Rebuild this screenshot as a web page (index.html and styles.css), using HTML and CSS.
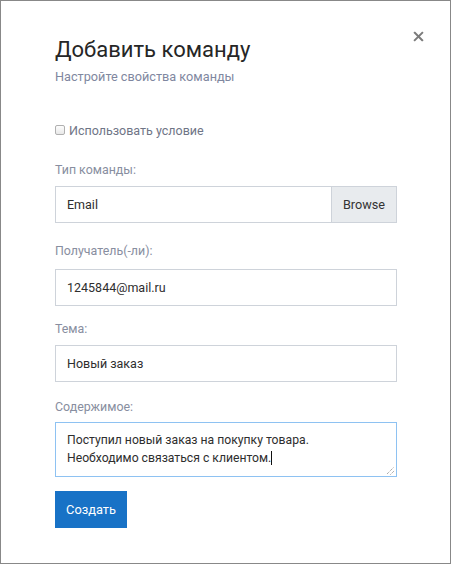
FILE: index.html
```html
<!DOCTYPE html>
<html lang="ru">
<head>
<meta charset="utf-8">
<link rel="stylesheet" href="styles.css">
</head>
<body>
<div class="dialog">
  <button class="close" aria-label="Закрыть">
    <svg width="11" height="11" viewBox="0 0 11 11"><path d="M1.8 1.8 L9.2 9.2 M9.2 1.8 L1.8 9.2" stroke="#7b7b7b" stroke-width="2" stroke-linecap="square"/></svg>
  </button>
  <h1 class="title">Добавить команду</h1>
  <p class="subtitle">Настройте свойства команды</p>

  <label class="check"><span class="box"></span>Использовать условие</label>

  <div class="field f1">
    <div class="label">Тип команды:</div>
    <div class="group">
      <div class="input grow">Email</div>
      <div class="addon">Browse</div>
    </div>
  </div>

  <div class="field f2">
    <div class="label l2">Получатель(-ли):</div>
    <div class="input">1245844@mail.ru</div>
  </div>

  <div class="field f3">
    <div class="label">Тема:</div>
    <div class="input">Новый заказ</div>
  </div>

  <div class="field f4">
    <div class="label l4">Содержимое:</div>
    <div class="textarea">Поступил новый заказ на покупку товара.<br>Необходимо связаться с клиентом.<span class="caret"></span>
      <svg class="grip" width="9" height="9" viewBox="0 0 9 9"><path d="M1 8 L8 1 M4.5 8.5 L8.5 4.5" stroke="#8a8a8a" stroke-width="1" stroke-dasharray="1 1"/></svg>
    </div>
  </div>

  <button class="submit">Создать</button>
</div>
</body>
</html>
```

FILE: styles.css
```css
html, body {
  margin: 0;
  padding: 0;
  background: #fff;
}
body {
  font-family: Roboto, "Liberation Sans", sans-serif;
}
.dialog {
  position: relative;
  box-sizing: border-box;
  width: 451px;
  height: 564px;
  border: 1px solid #888;
  padding: 35px 53px 0 54px;
}
.close {
  position: absolute;
  top: 30px;
  left: 412px;
  width: 11px;
  height: 11px;
  padding: 0;
  border: 0;
  background: none;
  display: block;
}
.close svg { display: block; }
.title {
  margin: 0;
  font-size: 22px;
  line-height: 28px;
  font-weight: 400;
  color: #262626;
}
.subtitle {
  margin: 5px 0 0;
  font-size: 12.7px;
  line-height: 16px;
  color: #7f87a0;
}
.check {
  display: flex;
  align-items: center;
  margin-top: 38px;
  font-size: 12.5px;
  line-height: 16px;
  color: #6f7586;
}
.box {
  box-sizing: border-box;
  width: 10px;
  height: 10px;
  margin-top: -3px;
  border: 1px solid #b0b0b0;
  border-radius: 2px;
  background: linear-gradient(#fdfdfd, #e8e8e8);
  margin-right: 4px;
}
.f1 { margin-top: 23px; }
.f2 { margin-top: 20px; }
.f3 { margin-top: 15px; }
.f4 { margin-top: 17px; }
.label {
  font-size: 12.4px;
  line-height: 16px;
  color: #888ea0;
  margin-bottom: 8px;
}
.l2 { margin-bottom: 10px; }
.l4 { margin-bottom: 7px; }
.input {
  box-sizing: border-box;
  height: 37px;
  border: 1px solid #ced3da;
  padding: 0 11px;
  font-size: 12.5px;
  line-height: 35px;
  color: #2e2e2e;
}
.group {
  display: flex;
  border: 1px solid #ced3da;
  height: 37px;
  box-sizing: border-box;
}
.group .input {
  border: 0;
  height: 35px;
}
.grow { flex: 1; }
.addon {
  width: 64px;
  border-left: 1px solid #ced3da;
  background: #e8ebee;
  font-size: 12.7px;
  line-height: 35px;
  text-align: center;
  color: #333;
}
.textarea {
  position: relative;
  box-sizing: border-box;
  height: 55px;
  border: 1px solid #8ec2f2;
  padding: 8px 11px 0;
  font-size: 12.2px;
  line-height: 18px;
  color: #2e2e2e;
}
.caret {
  display: inline-block;
  width: 1px;
  height: 14px;
  background: #111;
  vertical-align: -3px;
}
.grip {
  position: absolute;
  right: 1px;
  bottom: 1px;
}
.submit {
  display: block;
  margin-top: 14px;
  width: 72px;
  height: 37px;
  border: 0;
  padding: 0;
  background: #1872c6;
  color: #fff;
  font-family: Roboto, "Liberation Sans", sans-serif;
  font-size: 12.8px;
}
```
